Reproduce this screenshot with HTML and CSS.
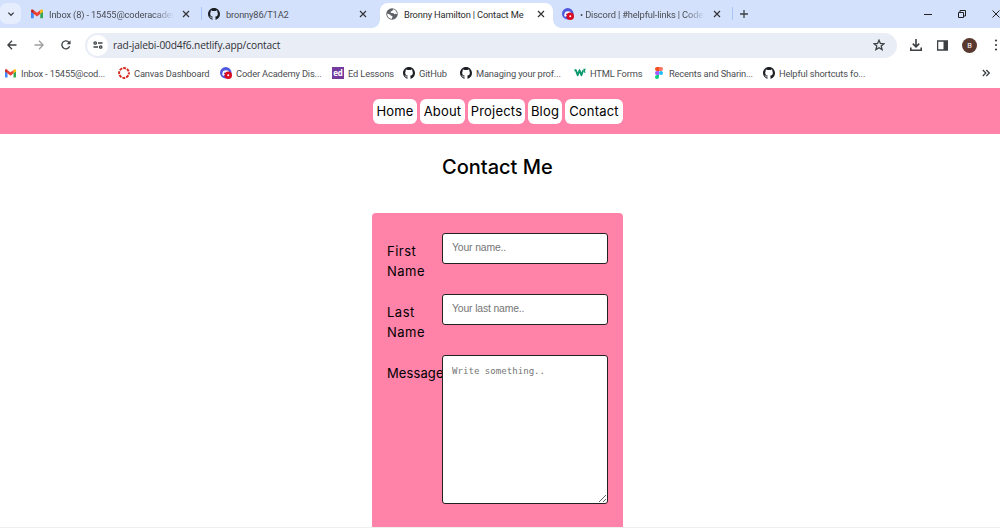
FILE: index.html
```html
<!DOCTYPE html>
<html lang="en">
<head>
<meta charset="utf-8">
<title>Bronny Hamilton | Contact Me</title>
<link rel="stylesheet" href="styles.css">
</head>
<body>
<svg class="defs" width="0" height="0">
  <symbol id="gmail" viewBox="0 0 24 24"><path fill="#4285f4" d="M1 20.500h4.500V11L0 7v12.500q0 1 1 1z"/><path fill="#34a853" d="M18.500 20.500H23q1 0 1-1V7l-5.500 4z"/><path fill="#ea4335" d="M5 4.200l7 5.300 7-5.300v7.300L12 16.800 5 11.500z"/><path fill="#c5221f" d="M0 5.500C0 3 2.500 2.200 4.300 3.500L5.500 4.500v7L0 7.500z"/><path fill="#fbbc04" d="M24 5.500c0-2.500-2.500-3.300-4.300-2l-1.200 1v7l5.500-4z"/></symbol>
  <symbol id="github" viewBox="0 0 16 16"><path fill="#1b1f24" d="M8 0C3.580 0 0 3.580 0 8c0 3.540 2.290 6.530 5.470 7.590.4.070.55-.17.55-.38 0-.19-.01-.82-.01-1.490-2.010.37-2.530-.49-2.690-.94-.09-.23-.48-.94-.82-1.130-.28-.15-.68-.52-.01-.53.63-.01 1.080.58 1.230.82.72 1.210 1.870.87 2.330.66.07-.52.28-.87.51-1.070-1.780-.2-3.640-.89-3.640-3.950 0-.87.31-1.590.82-2.150-.08-.2-.36-1.020.08-2.120 0 0 .67-.21 2.200.82a7.500 7.500 0 0 1 4 0c1.530-1.040 2.200-.82 2.200-.82.44 1.100.16 1.920.08 2.120.51.56.82 1.270.82 2.150 0 3.070-1.870 3.750-3.650 3.950.29.25.54.73.54 1.480 0 1.070-.01 1.930-.01 2.200 0 .21.15.46.55.38A8 8 0 0 0 16 8c0-4.420-3.580-8-8-8z"/></symbol>
  <symbol id="discord" viewBox="0 0 24 24"><circle cx="11.500" cy="11.500" r="11.500" fill="#4f59dc"/><path fill="#fff" d="M6.500 8q5.500-3.500 11 0l1 5-12 4.500q-2-.5-2-2.500 0-4 2-7z"/><circle cx="9.500" cy="12.500" r="1.700" fill="#4f59dc"/><circle cx="16.500" cy="16.500" r="7.500" fill="#d80b20"/><circle cx="16.500" cy="16.500" r="2" fill="#fff"/></symbol>
  <symbol id="globe" viewBox="0 0 24 24"><circle cx="12" cy="12" r="11.500" fill="#5f6368"/><path fill="#fff" d="M2.500 11l6 2.500 1.500 2 3 .5-1 5.500C6 21.500 2 17 2.500 11zM14 2.500l-1 3-3.500 1.500v3h5l2 2.500 3-1 2.500 1C22 7 19 3.500 14 2.500z"/></symbol>
  <symbol id="canvas" viewBox="0 0 24 24"><circle cx="12" cy="12" r="9.800" fill="none" stroke="#d52b1e" stroke-width="4" stroke-dasharray="5.700 2" stroke-dashoffset="2.850"/></symbol>
  <symbol id="w3" viewBox="0 0 26 20"><path fill="none" stroke="#059669" stroke-width="4" stroke-linejoin="round" d="M1 4h3l4 11 4-11 4 11 4-11"/><path fill="none" stroke="#059669" stroke-width="2.200" d="M20 2h4l-2 4q3 1 1 4"/></symbol>
  <symbol id="figma" viewBox="0 0 16 24"><path fill="#f24e1e" d="M8 0H4a4 4 0 0 0 0 8h4z"/><path fill="#ff7262" d="M8 0h4a4 4 0 0 1 0 8H8z"/><path fill="#a259ff" d="M8 8H4a4 4 0 0 0 0 8h4z"/><circle cx="12" cy="12" r="4" fill="#1abcfe"/><path fill="#0acf83" d="M8 16H4a4 4 0 1 0 4 4z"/></symbol>
  <symbol id="close" viewBox="0 0 8 8"><path fill="none" stroke="currentColor" stroke-width="1.200" d="M1 1l6 6M7 1L1 7"/></symbol>
</svg>

<header class="browser">
  <div class="tabs">
    <div class="tab-search"><svg width="8" height="8" viewBox="0 0 8 8"><path class="line" d="M1.300 2.600L4 5.300l2.700-2.700"/></svg></div>
    <div class="tab"><svg class="fav"><use href="#gmail"/></svg><span class="tab-title fade t-inbox">Inbox (8) - 15455@coderacader</span><svg class="close"><use href="#close"/></svg></div>
    <div class="tab tab-divided"><svg class="fav"><use href="#github"/></svg><span class="tab-title t-repo">bronny86/T1A2</span><svg class="close"><use href="#close"/></svg></div>
    <div class="tab tab-active"><svg class="fav"><use href="#globe"/></svg><span class="tab-title t-contact">Bronny Hamilton | Contact Me</span><svg class="close"><use href="#close"/></svg></div>
    <div class="tab"><svg class="fav"><use href="#discord"/></svg><span class="tab-title fade t-discord">• Discord | #helpful-links | Code</span><svg class="close"><use href="#close"/></svg></div>
    <div class="new-tab"><svg width="8" height="8" viewBox="0 0 8 8"><path class="line" d="M4 0v8M0 4h8"/></svg></div>
    <div class="window-controls">
      <svg width="8" height="8" viewBox="0 0 8 8"><path class="thin" d="M0 4.500h8"/></svg>
      <svg width="8" height="8" viewBox="0 0 8 8"><path class="thin" d="M.5 2.500h5v5h-5zM2 2V.5h5.500V6H6"/></svg>
      <svg width="8" height="8" viewBox="0 0 8 8"><path class="thin" d="M.5.500l7 7M7.500.500l-7 7"/></svg>
    </div>
  </div>

  <div class="toolbar">
    <div class="nav-buttons">
      <svg width="10" height="10" viewBox="0 0 10 10"><path class="line" d="M9.500 5H1M5 .8L.9 5 5 9.200"/></svg>
      <svg class="disabled" width="10" height="10" viewBox="0 0 10 10"><path class="line" d="M.5 5H9M5 .8L9.100 5 5 9.200"/></svg>
      <svg width="10" height="10" viewBox="0 0 10 10"><path class="line" d="M8.600 6.300A4 4 0 1 1 8 2.300l1 1"/><path fill="#3c4043" d="M9.500.3v4H5.700z"/></svg>
    </div>
    <div class="omnibox">
      <span class="site-info"><svg width="10" height="8" viewBox="0 0 10 8"><path class="line" d="M5 2h4.500M.5 6H5"/><circle class="line" cx="2.200" cy="2" r="1.200"/><circle class="line" cx="7.700" cy="6" r="1.200"/></svg></span>
      <span class="url">rad-jalebi-00d4f6.netlify.app/contact</span>
      <svg class="star" width="12" height="12" viewBox="0 0 12 12"><path class="line" d="M6 1.200l1.400 3.300 3.500.3-2.700 2.300.9 3.500L6 8.700l-3.100 1.900.9-3.500L1.100 4.800l3.500-.3z"/></svg>
    </div>
    <div class="actions">
      <svg width="12" height="12" viewBox="0 0 12 12"><path class="line heavy" d="M6 0v7.500M2.800 4.600L6 7.800l3.200-3.200M.8 8.500v2.700h10.400V8.500"/></svg>
      <svg width="11" height="11" viewBox="0 0 11 11"><path class="line" d="M.6 1h9.800v9H.6z"/><path fill="#3c4043" d="M6.500 1H10v9H6.500z"/></svg>
      <span class="avatar">B</span>
      <svg class="kebab" width="4" height="12" viewBox="0 0 4 12"><circle cx="2" cy="1.500" r="1.100"/><circle cx="2" cy="6" r="1.100"/><circle cx="2" cy="10.500" r="1.100"/></svg>
    </div>
  </div>

  <div class="bookmarks">
    <span class="bookmark b1"><svg class="fav small"><use href="#gmail"/></svg>Inbox - 15455@cod...</span>
    <span class="bookmark b2"><svg class="fav"><use href="#canvas"/></svg>Canvas Dashboard</span>
    <span class="bookmark b3"><svg class="fav"><use href="#discord"/></svg>Coder Academy Dis...</span>
    <span class="bookmark b4"><i class="ed">ed</i>Ed Lessons</span>
    <span class="bookmark b5"><svg class="fav"><use href="#github"/></svg>GitHub</span>
    <span class="bookmark b6"><svg class="fav"><use href="#github"/></svg>Managing your prof...</span>
    <span class="bookmark b7"><svg class="fav"><use href="#w3"/></svg>HTML Forms</span>
    <span class="bookmark b8"><svg class="fav"><use href="#figma"/></svg>Recents and Sharin...</span>
    <span class="bookmark b9"><svg class="fav"><use href="#github"/></svg>Helpful shortcuts fo...</span>
    <svg class="more" width="8" height="8" viewBox="0 0 8 8"><path class="line" d="M.8 1l3 3-3 3M4.300 1l3 3-3 3"/></svg>
  </div>
</header>

<nav class="site-nav">
  <a class="n-home">Home</a><a class="n-about">About</a><a class="n-projects">Projects</a><a class="n-blog">Blog</a><a class="n-contact">Contact</a>
</nav>
<main class="page">
  <h1 class="title">Contact Me</h1>
  <form class="form">
    <div class="row"><label class="label" for="fname">First<br>Name</label><input class="field" id="fname" type="text" placeholder="Your name.."></div>
    <div class="row"><label class="label" for="lname">Last<br>Name</label><input class="field" id="lname" type="text" placeholder="Your last name.."></div>
    <div class="row"><label class="label label-message" for="message">Message</label><textarea class="field message" id="message" placeholder="Write something.."></textarea></div>
  </form>
</main>
<div class="bottom-edge"></div>
</body>
</html>
```

FILE: styles.css
```css
* { box-sizing: border-box; }
html, body { height: 100%; overflow: hidden; }
body {
  margin: 0;
  display: flex;
  flex-direction: column;
  background: #fff;
  color: #000;
  font-family: Inter, "Open Sans", sans-serif;
}
.defs { position: absolute; }

/* Browser chrome */
.browser {
  flex: none;
  height: 88px;
  color: #4a4d51;
  font-family: Roboto, "Open Sans", sans-serif;
  font-size: 9.3px;
  letter-spacing: -.15px;
  white-space: nowrap;
}
.line { fill: none; stroke: #3c4043; stroke-width: 1.3; }
.heavy { stroke-width: 1.6; }
.thin { fill: none; stroke: #222; stroke-width: 1; }
.fav { width: 12px; height: 12px; flex: none; }
.small { width: 11px; height: 11px; margin-right: 1px; }

.tabs { display: flex; height: 28px; background: #d3e1fd; }
.tab-search {
  display: flex;
  align-items: center;
  justify-content: center;
  width: 21px;
  height: 21px;
  margin: 3px 3px 0 0;
  border-radius: 7px;
  background: #e6eefe;
}
.tab {
  display: flex;
  align-items: center;
  flex: none;
  width: 177px;
  height: 28px;
  padding: 0 11px 0 7px;
}
.tab-title { width: 125px; margin-left: 6px; }
.close { width: 8px; height: 8px; margin-left: auto; color: #333; }
.fade { -webkit-mask-image: linear-gradient(90deg, #000 84%, transparent); mask-image: linear-gradient(90deg, #000 84%, transparent); }
.tab-divided { background: linear-gradient(#a9c5f7, #a9c5f7) 0 7px / 1px 13px no-repeat; }
.tab-active {
  position: relative;
  width: 173px;
  height: 25px;
  margin: 3px 2px 0;
  padding: 0 8px 3px 6px;
  border-radius: 8px 8px 0 0;
  background: #fff;
  color: #2b2b2b;
}
.tab-active::before, .tab-active::after {
  content: "";
  position: absolute;
  bottom: 0;
  width: 8px;
  height: 8px;
}
.tab-active::before { left: -8px; background: radial-gradient(circle at 0 0, transparent 7.5px, #fff 8px); }
.tab-active::after { right: -8px; background: radial-gradient(circle at 100% 0, transparent 7.5px, #fff 8px); }
.new-tab { display: flex; align-items: center; height: 27px; padding-left: 8px; background: linear-gradient(#a9c5f7, #a9c5f7) 0 7px / 1px 13px no-repeat; }
.window-controls { display: flex; align-items: center; gap: 26px; height: 27px; margin-left: auto; }

.toolbar { display: flex; align-items: center; height: 34px; }
.nav-buttons { display: flex; gap: 17px; width: 85px; padding-left: 7px; }
.disabled { opacity: .5; }
.omnibox {
  display: flex;
  align-items: center;
  width: 812px;
  height: 25px;
  padding: 0 12px 0 2px;
  border-radius: 13px;
  background: #e9edf6;
}
.site-info { display: flex; align-items: center; justify-content: center; width: 21px; height: 21px; border-radius: 50%; background: #fff; }
.url { margin-left: 5px; color: #303134; font-family: "Open Sans", sans-serif; font-size: 10.2px; letter-spacing: -.14px; }
.star { margin-left: auto; }
.actions { display: flex; align-items: center; margin-left: 13px; gap: 15px; }
.avatar { display: grid; place-items: center; width: 15px; height: 15px; margin-left: -1px; border-radius: 50%; background: #58382f; color: #fff; font-size: 7.5px; }
.kebab { fill: #3c4043; margin-left: 2px; }

.bookmarks { display: flex; align-items: center; height: 22px; padding-left: 5px; }
.bookmark { display: flex; align-items: center; gap: 4px; flex: none; }
.ed { width: 12px; height: 12px; background: #743b9f; color: #fff; font: bold 8px/11px "Open Sans", sans-serif; text-align: center; }
.b1 { width: 113px; }
.b2 { width: 102px; }
.b3 { width: 112px; }
.b4 { width: 71px; }
.b5 { width: 57px; }
.b6 { width: 114px; }
.b7 { width: 79px; }
.b8 { width: 110px; }
.more { margin: 0 10px 0 auto; }

/* Site */
.site-nav {
  display: flex;
  flex: none;
  align-items: flex-start;
  height: 46px;
  padding: 11px 0 0 373px;
  background: #ff82a9;
  font-size: 13px;
  letter-spacing: .2px;
  line-height: 25px;
}
.site-nav a { height: 25px; margin-right: 3px; border-radius: 6px; background: #fff; text-align: center; }
.n-home { width: 44px; }
.n-about { width: 45px; }
.n-projects { width: 57px; }
.n-blog { width: 34px; }
.n-contact { width: 58px; }

.page { display: flex; flex-direction: column; flex: 1; min-height: 0; }
.title { margin: 18px 0 31px 442px; font-size: 20px; font-weight: 500; line-height: 30px; white-space: nowrap; }
.form {
  flex: 1;
  width: 251px;
  margin-left: 372px;
  padding: 20px 15px 0;
  border-radius: 4px 4px 0 0;
  background: #ff82a9;
}
.row { display: flex; align-items: flex-start; min-height: 61px; }
.label { width: 55px; padding-top: 9px; font-size: 13px; letter-spacing: .5px; line-height: 19.5px; white-space: nowrap; }
.label-message { letter-spacing: .1px; }
.field {
  width: 166px;
  height: 31px;
  margin: 0;
  padding: 8px 9px 10px;
  border: 1px solid #222;
  border-radius: 3px;
  background: #fff;
  font: 10.4px "Liberation Sans", Arial, sans-serif;
  letter-spacing: -.15px;
}
.field::placeholder { color: #757575; }
.message { height: 149px; padding: 9px; font: 9.1px/12px "DejaVu Sans Mono", monospace; letter-spacing: 0; }
.bottom-edge { flex: none; height: 1px; background: #eee; }
```
